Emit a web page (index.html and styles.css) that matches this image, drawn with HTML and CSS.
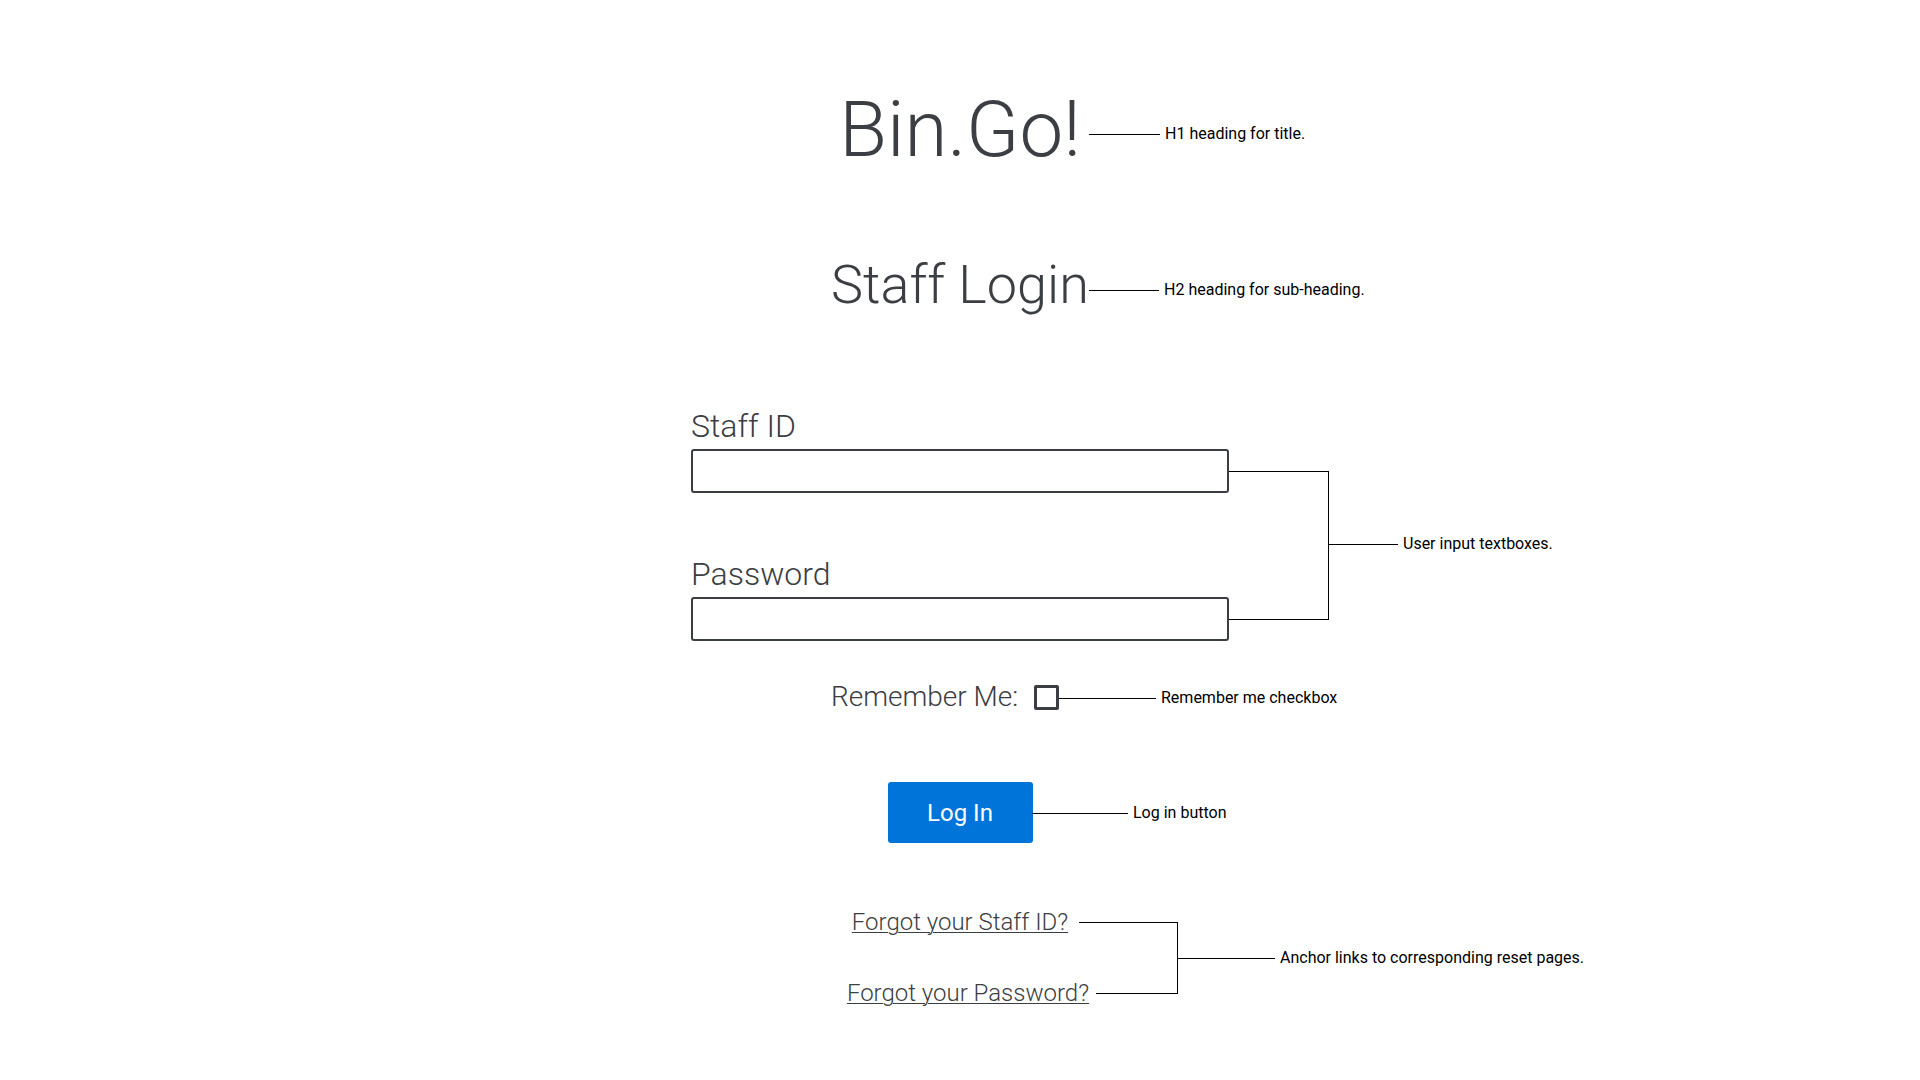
FILE: index.html
```html
<!DOCTYPE html>
<html lang="en">
<head>
<meta charset="utf-8">
<title>Bin.Go! Staff Login</title>
<link rel="stylesheet" href="styles.css">
</head>
<body>
<main class="page">
  <div class="row row-title">
    <h1 class="title">Bin.Go!</h1>
    <div class="note note-h1"><span class="note-line w71"></span><span class="note-text">H1 heading for title.</span></div>
  </div>

  <div class="row row-sub">
    <h2 class="subtitle">Staff Login</h2>
    <div class="note note-h2"><span class="note-line w70"></span><span class="note-text">H2 heading for sub-heading.</span></div>
  </div>

  <form class="form">
    <div class="fields">
      <label class="field">
        <span class="field-label">Staff ID</span>
        <input class="field-input" type="text" name="staffid">
      </label>
      <label class="field">
        <span class="field-label">Password</span>
        <input class="field-input" type="password" name="password">
      </label>
      <div class="bracket bracket-fields"></div>
      <div class="note note-fields"><span class="note-line w70"></span><span class="note-text">User input textboxes.</span></div>
    </div>

    <div class="row row-remember">
      <label class="remember">
        <span class="remember-text">Remember Me:</span>
        <input class="remember-box" type="checkbox" name="remember">
      </label>
      <div class="note note-remember"><span class="note-line w97"></span><span class="note-text">Remember me checkbox</span></div>
    </div>

    <div class="row row-button">
      <button class="login" type="button">Log In</button>
      <div class="note note-button"><span class="note-line w96"></span><span class="note-text">Log in button</span></div>
    </div>

    <div class="row row-links">
      <a class="link" href="#">Forgot your Staff ID?</a>
      <a class="link link-second" href="#">Forgot your Password?</a>
      <div class="bracket bracket-links"></div>
      <div class="bracket-low"></div>
      <div class="note note-links"><span class="note-line w98"></span><span class="note-text">Anchor links to corresponding reset pages.</span></div>
    </div>
  </form>
</main>
</body>
</html>
```

FILE: styles.css
```css
html, body {
  margin: 0;
  padding: 0;
  background: #ffffff;
}

body {
  font-family: Roboto, "Liberation Sans", Arial, sans-serif;
  color: #3b3e42;
  width: 1920px;
  height: 1080px;
  overflow: hidden;
}

.page {
  display: flex;
  flex-direction: column;
  align-items: center;
  padding-top: 91px;
}

.row {
  position: relative;
  width: 100%;
  display: flex;
  flex-direction: column;
  align-items: center;
}

.title {
  margin: 0;
  font-size: 78px;
  line-height: 78px;
  font-weight: 300;
}

.row-sub {
  margin-top: 89px;
}

.subtitle {
  margin: 0;
  font-size: 54px;
  line-height: 54px;
  font-weight: 300;
}

.form {
  width: 100%;
  display: flex;
  flex-direction: column;
  align-items: center;
  margin-top: 99px;
}

.fields {
  position: relative;
  width: 538px;
  display: flex;
  flex-direction: column;
  gap: 66px;
}

.field {
  display: flex;
  flex-direction: column;
  gap: 8px;
}

.field-label {
  font-size: 32px;
  line-height: 30px;
  font-weight: 300;
  padding-left: 0;
}

.field-input {
  box-sizing: border-box;
  width: 538px;
  height: 44px;
  margin: 0;
  border: 2px solid #3a3d41;
  border-radius: 3px;
  background: #fff;
  outline: none;
  font: 300 20px Roboto, sans-serif;
  padding: 0 10px;
}

.row-remember {
  margin-top: 41px;
}

.remember {
  display: flex;
  align-items: center;
  height: 30px;
  padding-right: 30px;
}

.remember-text {
  font-size: 28px;
  line-height: 30px;
  font-weight: 300;
}

.remember-box {
  appearance: none;
  -webkit-appearance: none;
  box-sizing: border-box;
  width: 25px;
  height: 25px;
  margin: 1px 0 0 16px;
  border: 3px solid #3b3e42;
  border-radius: 2px;
  background: #fff;
}

.row-button {
  margin-top: 70px;
}

.login {
  width: 145px;
  height: 61px;
  border: none;
  border-radius: 3px;
  background: #0074d9;
  color: #ffffff;
  font-family: Roboto, "Liberation Sans", sans-serif;
  font-size: 24px;
  font-weight: 400;
  padding: 0;
}

.row-links {
  margin-top: 67px;
  gap: 47px;
}

.link {
  font-size: 24px;
  line-height: 24px;
  font-weight: 300;
  color: #3b3e42;
  text-decoration: underline;
  text-decoration-thickness: 1px;
  text-underline-offset: 2px;
}

.link-second {
  margin-left: 16px;
}

/* annotations */
.note {
  position: absolute;
  display: flex;
  align-items: center;
  gap: 5px;
  height: 20px;
  white-space: nowrap;
}

.note-line {
  display: block;
  height: 1px;
  background: #000;
}

.w70 { width: 70px; }
.w71 { width: 71px; }
.w96 { width: 96px; }
.w97 { width: 97px; }
.w98 { width: 98px; }

.note-text {
  font-family: Roboto, "Liberation Sans", sans-serif;
  font-size: 16px;
  line-height: 20px;
  font-weight: 400;
  color: #000;
}

.note-h1 {
  left: calc(50% + 129px);
  top: 33px;
}

.note-h2 {
  left: calc(50% + 129px);
  top: 22px;
}

.bracket {
  position: absolute;
  box-sizing: border-box;
  border: 1px solid #000;
  border-left: none;
}

.bracket-fields {
  left: 100%;
  top: 60px;
  width: 100px;
  height: 149px;
}

.note-fields {
  left: calc(100% + 99px);
  top: 123px;
}

.note-remember {
  left: calc(50% + 99px);
  top: 6px;
}

.note-button {
  left: calc(50% + 72px);
  top: 21px;
}

.bracket-links {
  left: calc(50% + 119px);
  top: 12px;
  width: 99px;
  height: 72px;
  border-bottom: none;
}

.bracket-low {
  position: absolute;
  left: calc(50% + 136px);
  top: 83px;
  width: 81px;
  height: 1px;
  background: #000;
}

.note-links {
  left: calc(50% + 217px);
  top: 38px;
}
```
